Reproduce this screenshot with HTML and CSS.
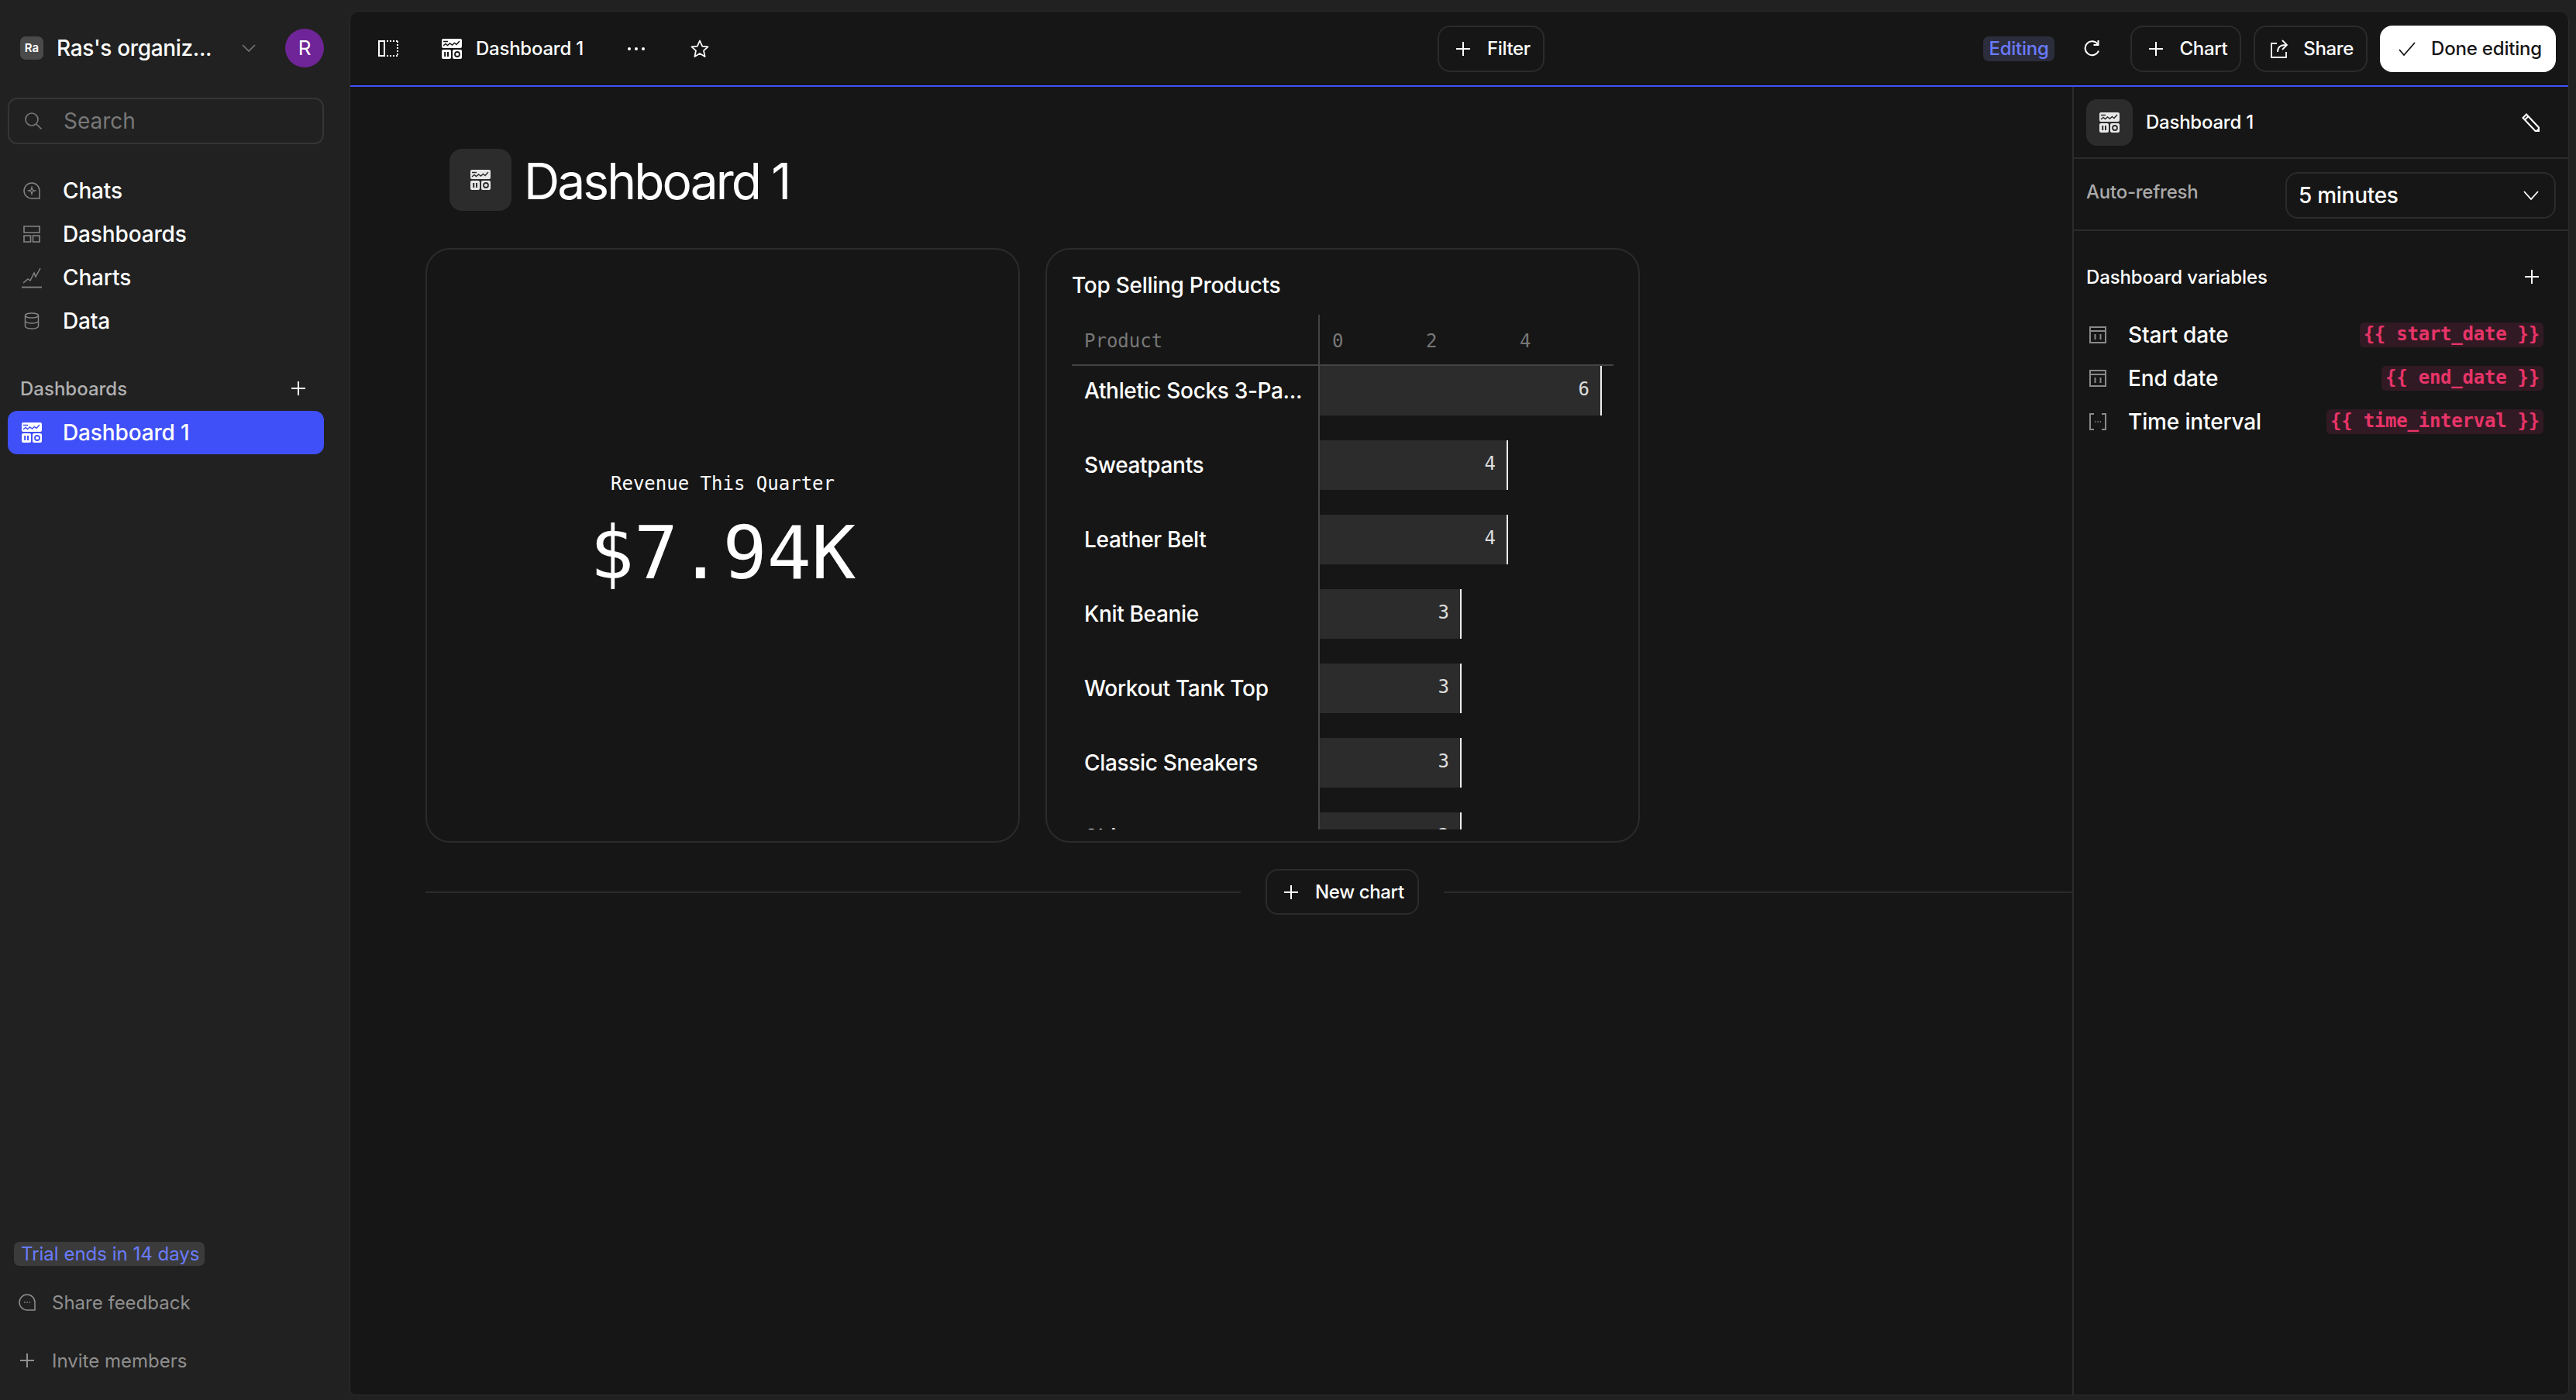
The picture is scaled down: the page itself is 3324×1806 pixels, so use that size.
FILE: index.html
```html
<!DOCTYPE html>
<html lang="en">
<head>
    <meta charset="UTF-8">
    <title>Dashboard 1</title>
    <link rel="stylesheet" href="styles.css">
</head>
<body>
    <svg class="defs" width="0" height="0">
        <symbol id="dash" viewBox="0 0 26 26">
            <rect x="0" y="0" width="26" height="12" rx="2" fill="currentColor"/>
            <path d="M2 3.5h6M2 9l3-2.5 2.5 2 3-2.5 3 2 3-2.5 2.5 2L23 3" fill="none" stroke="var(--cut)" stroke-width="1.5"/>
            <rect x="0" y="14" width="12" height="12" rx="2" fill="currentColor"/>
            <rect x="3.2" y="17" width="2" height="6" fill="var(--cut)"/>
            <rect x="7" y="17" width="2" height="6" fill="var(--cut)"/>
            <rect x="14" y="14" width="12" height="12" rx="2" fill="currentColor"/>
            <circle cx="20" cy="20" r="3" fill="none" stroke="var(--cut)" stroke-width="1.8"/>
        </symbol>
        <symbol id="plus" viewBox="0 0 18 18">
            <path d="M9 0v18M0 9h18" fill="none" stroke="currentColor" stroke-width="2"/>
        </symbol>
        <symbol id="cal" viewBox="0 0 22 22">
            <path d="M1 1h20v20H1zM1 6h20M7.500 10v7M14.500 10v7" fill="none" stroke="currentColor" stroke-width="2"/>
        </symbol>
    </svg>

    <aside class="sidebar">
        <div class="org">
            <span class="org-logo">Ra</span>
            <span class="org-name">Ras's organiz...</span>
            <svg class="org-chevron" viewBox="0 0 18 10"><path d="M1 1l8 8 8-8" fill="none" stroke="currentColor" stroke-width="1.6"/></svg>
            <span class="avatar">R</span>
        </div>

        <div class="search">
            <svg class="search-icon" viewBox="0 0 22 22"><circle cx="9" cy="9" r="8" fill="none" stroke="currentColor" stroke-width="1.700"/><path d="M14.800 15l6.700 6.500" stroke="currentColor" stroke-width="1.700"/></svg>
            <span>Search</span>
        </div>

        <nav class="nav">
            <a class="nav-item">
                <svg class="nav-icon" viewBox="0 0 22 22"><path d="M21 21H11C5.500 21 1 16.500 1 11S5.500 1 11 1s10 4.500 10 10z" fill="none" stroke="currentColor" stroke-width="1.500"/><path d="M11 6.500l1 3.500 3.500 1-3.500 1-1 3.500-1-3.500-3.500-1 3.500-1z" fill="none" stroke="currentColor" stroke-width="1.200"/></svg>
                Chats
            </a>
            <a class="nav-item">
                <svg class="nav-icon" viewBox="0 0 22 22"><path d="M1 1h20v8H1zM1 13h8.500v8H1zM12.500 13H21v8h-8.500z" fill="none" stroke="currentColor" stroke-width="1.600"/></svg>
                Dashboards
            </a>
            <a class="nav-item">
                <svg class="nav-icon chart-icon" viewBox="0 0 26 27"><path d="M2 20l6-5 3 2 5-10 2 5 6-11" fill="none" stroke="currentColor" stroke-width="1.500"/><path d="M0 25.500h26" stroke="currentColor" stroke-width="1.800"/></svg>
                Charts
            </a>
            <a class="nav-item">
                <svg class="nav-icon" viewBox="0 0 22 22"><ellipse cx="11" cy="4" rx="8.500" ry="3" fill="none" stroke="currentColor" stroke-width="1.500"/><path d="M2.500 4v14c0 1.600 3.800 3 8.500 3s8.500-1.400 8.500-3V4M2.500 11c0 1.600 3.800 3 8.500 3s8.500-1.400 8.500-3" fill="none" stroke="currentColor" stroke-width="1.500"/></svg>
                Data
            </a>
        </nav>

        <div class="section-head">
            <span>Dashboards</span>
            <svg class="icon-18"><use href="#plus"/></svg>
        </div>
        <a class="nav-item active">
            <svg class="dash-icon"><use href="#dash"/></svg>
            Dashboard 1
        </a>

        <div class="side-foot">
            <span class="trial">Trial ends in 14 days</span>
            <a class="foot-item">
                <svg class="foot-icon" viewBox="0 0 22 22"><path d="M21 21H11C5.500 21 1 16.500 1 11S5.500 1 11 1s10 4.500 10 10z" fill="none" stroke="currentColor" stroke-width="1.500"/><path d="M7 11h1.500M10.300 11h1.500M13.600 11h1.500" stroke="currentColor" stroke-width="1.500"/></svg>
                Share feedback
            </a>
            <a class="foot-item">
                <svg class="foot-icon plus-small"><use href="#plus"/></svg>
                Invite members
            </a>
        </div>
    </aside>

    <main class="main">
        <header class="topbar">
            <div class="top-left">
                <svg class="panel-icon" viewBox="0 0 26 21"><rect x="1" y="1" width="7" height="19" fill="none" stroke="currentColor" stroke-width="2"/><path d="M11 1h15M25 1v19M11 20h15" fill="none" stroke="currentColor" stroke-width="2" stroke-dasharray="2 2"/></svg>
                <svg class="dash-icon"><use href="#dash"/></svg>
                <span class="top-name">Dashboard 1</span>
                <span class="dots"><i></i><i></i><i></i></span>
                <svg class="star" viewBox="0 0 24 24"><path d="M12 1.500l3.200 7.100 7.300.8-5.500 5 1.600 7.600-6.600-3.900-6.600 3.900L7 14.400l-5.500-5 7.300-.8z" fill="none" stroke="currentColor" stroke-width="1.800" stroke-linejoin="round"/></svg>
            </div>
            <button class="btn filter-btn"><svg class="icon-18"><use href="#plus"/></svg>Filter</button>
            <div class="top-right">
                <span class="editing">Editing</span>
                <svg class="refresh" viewBox="0 0 21 21"><path d="M18 5A9 9 0 1 0 19 13.500" fill="none" stroke="currentColor" stroke-width="2"/><path d="M18.500 0v6h-6" fill="none" stroke="currentColor" stroke-width="2"/></svg>
                <div class="top-btns">
                    <button class="btn"><svg class="icon-18"><use href="#plus"/></svg>Chart</button>
                    <button class="btn"><svg class="share-icon" viewBox="0 0 22 24"><path d="M8 5H1v18h19v-7M9 16c0-6 3-9 11-9M15 1l6 6-6 6" fill="none" stroke="currentColor" stroke-width="1.800"/></svg>Share</button>
                    <button class="btn btn-done"><svg class="check" viewBox="0 0 22 18"><path d="M1 10l6 7L21 1" fill="none" stroke="currentColor" stroke-width="1.800"/></svg>Done editing</button>
                </div>
            </div>
        </header>

        <div class="workspace">
            <section class="canvas">
                <div class="title-row">
                    <span class="title-box"><svg class="dash-icon"><use href="#dash"/></svg></span>
                    <h1>Dashboard 1</h1>
                </div>

                <div class="cards">
                    <article class="card metric">
                        <div class="metric-label">Revenue This Quarter</div>
                        <div class="metric-value">$7.94K</div>
                    </article>

                    <article class="card">
                        <h2>Top Selling Products</h2>
                        <div class="chart">
                            <div class="chart-labels">
                                <div class="chart-head">Product</div>
                                <div class="chart-label">Athletic Socks 3-Pa...</div>
                                <div class="chart-label">Sweatpants</div>
                                <div class="chart-label">Leather Belt</div>
                                <div class="chart-label">Knit Beanie</div>
                                <div class="chart-label">Workout Tank Top</div>
                                <div class="chart-label">Classic Sneakers</div>
                                <div class="chart-label">Shirt</div>
                            </div>
                            <div class="chart-plot">
                                <div class="chart-head ticks"><span>0</span><span>2</span><span>4</span></div>
                                <div class="bar-row"><div class="bar" style="width: 364px">6</div></div>
                                <div class="bar-row"><div class="bar" style="width: 243px">4</div></div>
                                <div class="bar-row"><div class="bar" style="width: 243px">4</div></div>
                                <div class="bar-row"><div class="bar" style="width: 183px">3</div></div>
                                <div class="bar-row"><div class="bar" style="width: 183px">3</div></div>
                                <div class="bar-row"><div class="bar" style="width: 183px">3</div></div>
                                <div class="bar-row"><div class="bar" style="width: 183px">3</div></div>
                            </div>
                        </div>
                    </article>
                </div>

                <div class="add-row">
                    <span class="add-line first"></span>
                    <button class="btn add-btn"><svg class="icon-18"><use href="#plus"/></svg>New chart</button>
                    <span class="add-line"></span>
                </div>
            </section>

            <aside class="panel">
                <div class="panel-head">
                    <span class="panel-box"><svg class="dash-icon"><use href="#dash"/></svg></span>
                    <span class="panel-name">Dashboard 1</span>
                    <svg class="pencil" viewBox="0 0 24 24"><path d="M1.500 6L6 1.500 22 18.500V23h-4.500zM4 8.500L8.500 4" fill="none" stroke="currentColor" stroke-width="2"/><path d="M18 23l4-4.500V23z" fill="currentColor"/></svg>
                </div>
                <div class="refresh-row">
                    <span class="refresh-label">Auto-refresh</span>
                    <div class="select">
                        <span>5 minutes</span>
                        <svg viewBox="0 0 20 12"><path d="M1 1l9 10 9-10" fill="none" stroke="currentColor" stroke-width="1.800"/></svg>
                    </div>
                </div>
                <div class="vars-head">
                    <span>Dashboard variables</span>
                    <svg class="icon-18"><use href="#plus"/></svg>
                </div>
                <div class="var-row">
                    <svg class="var-icon"><use href="#cal"/></svg>
                    <span class="var-name">Start date</span>
                    <code class="var-code">{{ start_date }}</code>
                </div>
                <div class="var-row">
                    <svg class="var-icon"><use href="#cal"/></svg>
                    <span class="var-name">End date</span>
                    <code class="var-code">{{ end_date }}</code>
                </div>
                <div class="var-row">
                    <svg class="var-icon" viewBox="0 0 22 22"><path d="M6 1H1v20h5M16 1h5v20h-5" fill="none" stroke="currentColor" stroke-width="2"/><path d="M7 11h1.500M10.300 11h1.500M13.600 11h1.500" stroke="currentColor" stroke-width="1.500"/></svg>
                    <span class="var-name">Time interval</span>
                    <code class="var-code">{{ time_interval }}</code>
                </div>
            </aside>
        </div>
    </main>
</body>
</html>
```

FILE: styles.css
```css
:root {
    --bg-side: #212121;
    --bg-main: #161616;
    --line: #2b2b2b;
    --blue: #4050f8;
    --muted: #8f8f8f;
    --mono: 'DejaVu Sans Mono', monospace;
    --cut: #161616;
}

* {
    box-sizing: border-box;
}

html, body {
    height: 100%;
}

body {
    margin: 0;
    display: flex;
    background: var(--bg-side);
    color: #fff;
    font-family: Inter, 'Noto Sans', sans-serif;
    font-size: 28px;
    overflow: hidden;
}

.defs {
    position: absolute;
}

svg {
    flex: none;
    display: block;
}

.icon-18 {
    width: 18px;
    height: 18px;
}

.dash-icon {
    width: 26px;
    height: 26px;
}

/* sidebar */
.sidebar {
    width: 451px;
    flex: none;
    display: flex;
    flex-direction: column;
    padding: 37px 33px 27px 10px;
    --cut: var(--bg-side);
}

.org {
    display: flex;
    align-items: center;
    height: 50px;
    padding-left: 16px;
}

.org-logo {
    width: 30px;
    height: 30px;
    border-radius: 7px;
    background: #4a4a4a;
    font-size: 15px;
    font-weight: 600;
    line-height: 30px;
    text-align: center;
}

.org-name {
    margin-left: 17px;
    font-weight: 500;
    letter-spacing: -0.012em;
}

.org-chevron {
    width: 18px;
    height: 10px;
    margin-left: auto;
    margin-right: 38px;
    color: #777;
}

.avatar {
    width: 50px;
    height: 50px;
    border-radius: 50%;
    background: #6f2597;
    font-size: 26px;
    line-height: 50px;
    text-align: center;
}

.search {
    display: flex;
    align-items: center;
    gap: 28px;
    height: 60px;
    margin-top: 39px;
    padding-left: 20px;
    border: 2px solid #353535;
    border-radius: 12px;
    color: #777;
}

.search-icon {
    width: 22px;
    height: 22px;
}

.nav {
    margin-top: 32px;
}

.nav-item {
    display: flex;
    align-items: center;
    gap: 29px;
    height: 56px;
    padding-left: 20px;
    border-radius: 12px;
    font-weight: 500;
    letter-spacing: -0.005em;
}

.nav-icon {
    width: 22px;
    height: 22px;
    color: #858585;
}

.chart-icon {
    width: 26px;
    height: 27px;
    margin: 0 -2px;
}

.section-head {
    display: flex;
    align-items: center;
    justify-content: space-between;
    height: 48px;
    margin-top: 35px;
    padding: 0 24px 0 16px;
    color: #b0b0b0;
    font-size: 24px;
    font-weight: 500;
}

.section-head svg {
    color: #fff;
}

.nav-item.active {
    margin-top: 5px;
    gap: 27px;
    padding-left: 18px;
    background: var(--blue);
    --cut: var(--blue);
}

.side-foot {
    margin-top: auto;
    color: var(--muted);
    font-size: 24px;
}

.trial {
    display: block;
    width: 246px;
    height: 31px;
    margin: 0 0 23px 8px;
    padding-left: 9px;
    border-radius: 7px;
    background: #3b3b3b;
    color: #6a7bfb;
    line-height: 31px;
    white-space: nowrap;
}

.foot-item {
    display: flex;
    align-items: center;
    gap: 21px;
    height: 48px;
    margin-bottom: 27px;
    padding-left: 14px;
}

.foot-item:last-child {
    margin-bottom: 0;
}

.foot-icon {
    width: 22px;
    height: 22px;
}

.plus-small {
    width: 18px;
    height: 18px;
    margin: 0 2px;
}

/* main area */
.main {
    flex: 1;
    display: flex;
    flex-direction: column;
    margin: 14px 9px 6px 0;
    border: 1px solid var(--line);
    border-radius: 12px 12px 8px 8px;
    background: var(--bg-main);
    overflow: hidden;
}

.topbar {
    display: flex;
    align-items: center;
    flex: none;
    height: 97px;
    padding: 0 16px 0 36px;
    border-bottom: 2px solid var(--blue);
    font-size: 24px;
    font-weight: 500;
}

.top-left {
    display: flex;
    align-items: center;
    width: 1367px;
}

.panel-icon {
    width: 26px;
    height: 21px;
}

.top-left .dash-icon {
    margin-left: 56px;
}

.top-name {
    margin-left: 18px;
    letter-spacing: -0.01em;
}

.dots {
    display: flex;
    gap: 5px;
    margin-left: 57px;
}

.dots i {
    width: 4px;
    height: 4px;
    border-radius: 50%;
    background: #fff;
}

.star {
    width: 24px;
    height: 24px;
    margin-left: 59px;
}

.top-right {
    display: flex;
    align-items: center;
    margin-left: auto;
}

.editing {
    height: 32px;
    padding: 0 7px;
    border-radius: 7px;
    background: #2c2d3c;
    color: #6a7bfb;
    letter-spacing: -0.01em;
    line-height: 31px;
}

.refresh {
    width: 21px;
    height: 21px;
    margin: 0 39px 0 38px;
}

.top-btns {
    display: flex;
    gap: 16px;
}

.btn {
    display: flex;
    align-items: center;
    gap: 20px;
    height: 60px;
    padding: 0 16px 0 20px;
    border: 2px solid var(--line);
    border-radius: 16px;
    background: transparent;
    color: #fff;
    font: 500 24px Inter, 'Noto Sans', sans-serif;
    letter-spacing: -0.015em;
}

.btn .icon-18 {
    margin: 0 2px;
}

.btn-done {
    padding: 0 18px 0 24px;
    border: none;
    background: #fff;
    color: #161616;
    letter-spacing: -0.008em;
}

.share-icon {
    width: 22px;
    height: 24px;
}

.check {
    width: 22px;
    height: 18px;
}

.workspace {
    flex: 1;
    display: flex;
    min-height: 0;
}

.canvas {
    flex: 1;
    padding: 80px 0 0 97px;
}

.title-row {
    display: flex;
    align-items: center;
    gap: 16px;
    margin-left: 31px;
}

.title-box {
    display: flex;
    align-items: center;
    justify-content: center;
    width: 80px;
    height: 80px;
    border-radius: 16px;
    background: #2c2c2c;
    color: #e8e8e8;
    --cut: #2c2c2c;
}

h1 {
    margin: 0;
    padding-top: 2px;
    font-size: 64px;
    font-weight: 400;
    letter-spacing: -0.045em;
}

.cards {
    display: flex;
    gap: 33px;
    margin-top: 48px;
}

.card {
    width: 767px;
    height: 767px;
    padding: 28px 32px 0;
    border: 2px solid var(--line);
    border-radius: 32px;
}

.metric {
    display: flex;
    flex-direction: column;
    align-items: center;
    padding-top: 287px;
    font-family: var(--mono);
}

.metric-label {
    font-size: 24px;
    line-height: 30px;
}

.metric-value {
    margin-top: 18px;
    font-size: 95px;
    line-height: 112px;
}

h2 {
    margin: 0 0 20px;
    font-size: 28px;
    font-weight: 500;
    letter-spacing: -0.01em;
    line-height: 36px;
}

.chart {
    display: grid;
    grid-template-columns: 318px 1fr;
    height: 664px;
    overflow: hidden;
}

.chart-head {
    display: flex;
    align-items: center;
    height: 66px;
    padding: 3px 0 0 16px;
    border-bottom: 2px solid #444;
    color: #777;
    font: 24px var(--mono);
}

.chart-label {
    height: 96px;
    padding: 14px 0 0 16px;
    font-weight: 500;
    letter-spacing: -0.012em;
    line-height: 36px;
    white-space: nowrap;
}

.chart-plot {
    border-left: 2px solid #444;
}

.ticks span {
    width: 121px;
}

.bar-row {
    height: 96px;
}

.bar {
    height: 64px;
    padding-right: 14px;
    border-right: 2px solid #eee;
    background: #2c2c2c;
    color: #ddd;
    font: 24px/60px var(--mono);
    text-align: right;
}

.add-row {
    display: flex;
    align-items: center;
    gap: 32px;
    margin-top: 34px;
}

.add-line {
    flex: 1;
    height: 2px;
    background: var(--line);
}

.add-line.first {
    flex: none;
    width: 1052px;
}

.add-btn {
    height: 59px;
    padding: 0 17px 0 20px;
}

/* right panel */
.panel {
    width: 640px;
    flex: none;
    border-left: 2px solid var(--line);
    --cut: #2c2c2c;
}

.panel-head {
    display: flex;
    align-items: center;
    height: 93px;
    padding: 0 36px 0 16px;
    border-bottom: 2px solid var(--line);
}

.panel-box {
    display: flex;
    align-items: center;
    justify-content: center;
    width: 60px;
    height: 60px;
    border-radius: 14px;
    background: #2c2c2c;
    color: #e8e8e8;
}

.panel-name {
    margin-left: 17px;
    font-size: 24px;
    font-weight: 500;
    letter-spacing: -0.01em;
}

.pencil {
    width: 24px;
    height: 24px;
    margin-left: auto;
}

.refresh-row {
    display: flex;
    justify-content: space-between;
    height: 93px;
    padding: 17px 16px 0;
    border-bottom: 2px solid var(--line);
}

.refresh-label {
    margin-top: 8px;
    color: #aaa;
    font-size: 24px;
    font-weight: 500;
    letter-spacing: -0.01em;
    line-height: 36px;
}

.select {
    display: flex;
    align-items: center;
    justify-content: space-between;
    width: 349px;
    height: 60px;
    padding: 0 20px 0 15px;
    border: 2px solid var(--line);
    border-radius: 16px;
    font-weight: 500;
    letter-spacing: -0.01em;
}

.select svg {
    width: 20px;
    height: 12px;
}

.vars-head {
    display: flex;
    align-items: center;
    justify-content: space-between;
    height: 36px;
    margin-top: 41px;
    padding: 0 38px 0 16px;
    font-size: 24px;
    font-weight: 500;
    letter-spacing: -0.005em;
}

.var-row {
    display: flex;
    align-items: center;
    height: 56px;
    padding: 0 32px 0 20px;
    font-weight: 500;
    letter-spacing: -0.005em;
}

.vars-head + .var-row {
    margin-top: 29px;
}

.var-icon {
    width: 22px;
    height: 22px;
    color: #8a8a8a;
}

.var-name {
    margin-left: 28px;
}

.var-code {
    height: 32px;
    margin-left: auto;
    padding: 0 5px;
    border-radius: 6px;
    background: #321a24;
    color: #e83468;
    font: 600 24px/31px var(--mono);
    letter-spacing: -0.01em;
}
```
